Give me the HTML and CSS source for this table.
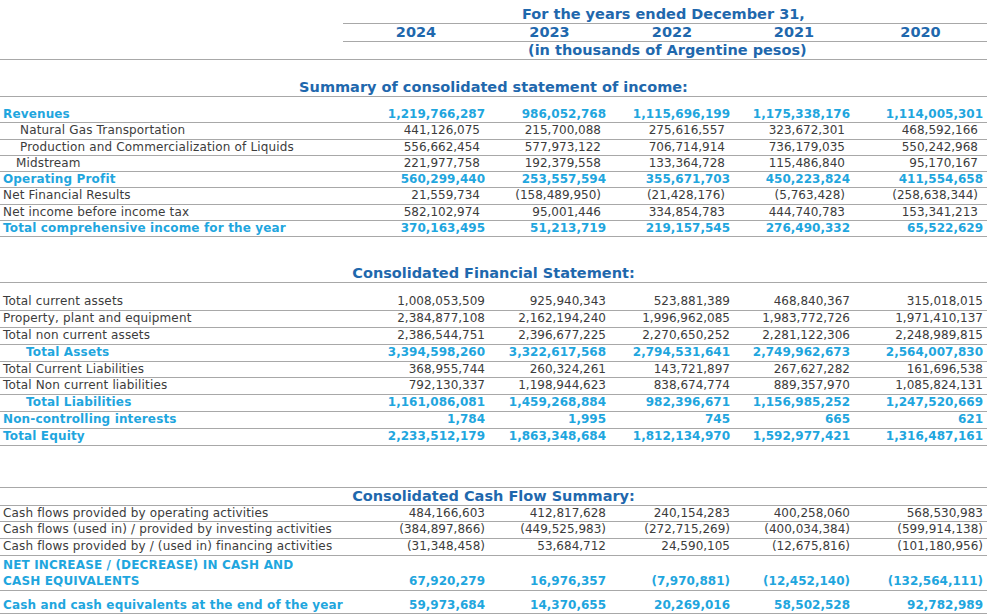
FILE: index.html
```html
<!DOCTYPE html>
<html lang="en">

<head>
    <meta charset="UTF-8">
    <meta name="viewport" content="width=device-width, initial-scale=1.0">
    <title>Selected Financial Data</title>
    <link rel="stylesheet" href="styles.css">
</head>

<body>
    <table class="fin">
        <colgroup>
            <col class="col-label">
            <col class="col-2024">
            <col class="col-2023">
            <col class="col-2022">
            <col class="col-2021">
            <col class="col-2020">
        </colgroup>

        <!-- Header -->
        <tbody class="head">
            <tr class="period">
                <td class="blank"></td>
                <td></td>
                <td colspan="3" class="period-text">For the years ended December 31,</td>
                <td></td>
            </tr>
            <tr class="years">
                <td class="blank"></td>
                <th>2024</th>
                <th>2023</th>
                <th>2022</th>
                <th>2021</th>
                <th>2020</th>
            </tr>
            <tr class="unit">
                <td></td>
                <td></td>
                <td colspan="3" class="unit-text">(in thousands of Argentine pesos)</td>
                <td></td>
            </tr>
        </tbody>

        <!-- Income statement -->
        <tbody class="income">
            <tr class="title">
                <th colspan="6">Summary of consolidated statement of income:</th>
            </tr>
            <tr class="total first">
                <td>Revenues</td>
                <td>1,219,766,287</td>
                <td>986,052,768</td>
                <td>1,115,696,199</td>
                <td>1,175,338,176</td>
                <td>1,114,005,301</td>
            </tr>
            <tr class="inset">
                <td class="sub">Natural Gas Transportation</td>
                <td>441,126,075</td>
                <td>215,700,088</td>
                <td>275,616,557</td>
                <td>323,672,301</td>
                <td>468,592,166</td>
            </tr>
            <tr class="inset">
                <td class="sub">Production and Commercialization of Liquids</td>
                <td>556,662,454</td>
                <td>577,973,122</td>
                <td>706,714,914</td>
                <td>736,179,035</td>
                <td>550,242,968</td>
            </tr>
            <tr class="inset">
                <td class="sub-sm">Midstream</td>
                <td>221,977,758</td>
                <td>192,379,558</td>
                <td>133,364,728</td>
                <td>115,486,840</td>
                <td>95,170,167</td>
            </tr>
            <tr class="total">
                <td>Operating Profit</td>
                <td>560,299,440</td>
                <td>253,557,594</td>
                <td>355,671,703</td>
                <td>450,223,824</td>
                <td>411,554,658</td>
            </tr>
            <tr class="inset">
                <td>Net Financial Results</td>
                <td>21,559,734</td>
                <td>(158,489,950)</td>
                <td>(21,428,176)</td>
                <td>(5,763,428)</td>
                <td>(258,638,344)</td>
            </tr>
            <tr class="inset">
                <td>Net income before income tax</td>
                <td>582,102,974</td>
                <td>95,001,446</td>
                <td>334,854,783</td>
                <td>444,740,783</td>
                <td>153,341,213</td>
            </tr>
            <tr class="total">
                <td>Total comprehensive income for the year</td>
                <td>370,163,495</td>
                <td>51,213,719</td>
                <td>219,157,545</td>
                <td>276,490,332</td>
                <td>65,522,629</td>
            </tr>
        </tbody>

        <!-- Financial position -->
        <tbody class="balance">
            <tr class="title">
                <th colspan="6">Consolidated Financial Statement:</th>
            </tr>
            <tr class="first">
                <td>Total current assets</td>
                <td>1,008,053,509</td>
                <td>925,940,343</td>
                <td>523,881,389</td>
                <td>468,840,367</td>
                <td>315,018,015</td>
            </tr>
            <tr>
                <td>Property, plant and equipment</td>
                <td>2,384,877,108</td>
                <td>2,162,194,240</td>
                <td>1,996,962,085</td>
                <td>1,983,772,726</td>
                <td>1,971,410,137</td>
            </tr>
            <tr>
                <td>Total non current assets</td>
                <td>2,386,544,751</td>
                <td>2,396,677,225</td>
                <td>2,270,650,252</td>
                <td>2,281,122,306</td>
                <td>2,248,989,815</td>
            </tr>
            <tr class="total">
                <td class="sub-lg">Total Assets</td>
                <td>3,394,598,260</td>
                <td>3,322,617,568</td>
                <td>2,794,531,641</td>
                <td>2,749,962,673</td>
                <td>2,564,007,830</td>
            </tr>
            <tr>
                <td>Total Current Liabilities</td>
                <td>368,955,744</td>
                <td>260,324,261</td>
                <td>143,721,897</td>
                <td>267,627,282</td>
                <td>161,696,538</td>
            </tr>
            <tr>
                <td>Total Non current liabilities</td>
                <td>792,130,337</td>
                <td>1,198,944,623</td>
                <td>838,674,774</td>
                <td>889,357,970</td>
                <td>1,085,824,131</td>
            </tr>
            <tr class="total">
                <td class="sub-lg">Total Liabilities</td>
                <td>1,161,086,081</td>
                <td>1,459,268,884</td>
                <td>982,396,671</td>
                <td>1,156,985,252</td>
                <td>1,247,520,669</td>
            </tr>
            <tr class="total">
                <td>Non-controlling interests</td>
                <td>1,784</td>
                <td>1,995</td>
                <td>745</td>
                <td>665</td>
                <td>621</td>
            </tr>
            <tr class="total">
                <td>Total Equity</td>
                <td>2,233,512,179</td>
                <td>1,863,348,684</td>
                <td>1,812,134,970</td>
                <td>1,592,977,421</td>
                <td>1,316,487,161</td>
            </tr>
        </tbody>

        <!-- Cash flow -->
        <tbody class="cash">
            <tr class="spacer">
                <td colspan="6"><div class="rule"></div></td>
            </tr>
            <tr class="title">
                <th colspan="6">Consolidated Cash Flow Summary:</th>
            </tr>
            <tr>
                <td>Cash flows provided by operating activities</td>
                <td>484,166,603</td>
                <td>412,817,628</td>
                <td>240,154,283</td>
                <td>400,258,060</td>
                <td>568,530,983</td>
            </tr>
            <tr>
                <td>Cash flows (used in) / provided by investing activities</td>
                <td>(384,897,866)</td>
                <td>(449,525,983)</td>
                <td>(272,715,269)</td>
                <td>(400,034,384)</td>
                <td>(599,914,138)</td>
            </tr>
            <tr>
                <td>Cash flows provided by / (used in) financing activities</td>
                <td>(31,348,458)</td>
                <td>53,684,712</td>
                <td>24,590,105</td>
                <td>(12,675,816)</td>
                <td>(101,180,956)</td>
            </tr>
            <tr class="total net">
                <td>NET INCREASE / (DECREASE) IN CASH AND<br>CASH EQUIVALENTS</td>
                <td>67,920,279</td>
                <td>16,976,357</td>
                <td>(7,970,881)</td>
                <td>(12,452,140)</td>
                <td>(132,564,111)</td>
            </tr>
            <tr class="total last">
                <td>Cash and cash equivalents at the end of the year</td>
                <td>59,973,684</td>
                <td>14,370,655</td>
                <td>20,269,016</td>
                <td>58,502,528</td>
                <td>92,782,989</td>
            </tr>
        </tbody>
    </table>
</body>

</html>
```

FILE: styles.css
```css
body {
    margin: 0;
    padding: 0;
    background: #fff;
    font-family: "DejaVu Sans", Verdana, sans-serif;
    font-size: 12px;
    color: #3c3c3c;
}

.fin {
    width: 987px;
    table-layout: fixed;
    border-collapse: separate;
    border-spacing: 0;
}

.col-label { width: 343px; }
.col-2024 { width: 146px; }
.col-2023 { width: 121px; }
.col-2022 { width: 124px; }
.col-2021 { width: 120px; }
.col-2020 { width: 133px; }

.fin td,
.fin th {
    padding: 0 4px 0 0;
    border-bottom: 1px solid #a8a8a8;
    text-align: right;
    white-space: nowrap;
    vertical-align: bottom;
}

.fin td:first-child {
    padding-left: 3px;
    text-align: left;
    letter-spacing: 0.15px;
}
/* Header */

.head td,
.head th {
    font-size: 14.5px;
    font-weight: bold;
    color: #1f68ad;
    line-height: 17px;
    letter-spacing: 0;
}

.fin .blank {
    border-bottom: none;
}

.period td {
    padding-top: 6px;
}

.fin .period-text {
    text-align: left;
    padding-left: 33px;
}

.fin .unit-text {
    text-align: left;
    padding-left: 39px;
}

.years th {
    text-align: center;
    padding: 0;
}
/* Section titles */

.title th {
    font-size: 14.5px;
    font-weight: bold;
    color: #1f68ad;
    text-align: center;
    line-height: 17px;
    padding: 0;
}

.income .title th { padding-top: 19px; }
.balance .title th { padding-top: 27.5px; }
.cash .title th { padding-top: 0; }
/* Rows */

.income td { line-height: 15.3px; }
.balance td { line-height: 15.8px; }
.cash td { line-height: 15.7px; }

.fin .first td { padding-top: 10px; }
.balance .first td { padding-top: 11.5px; }

.total td {
    font-weight: bold;
    color: #1fa6de;
}

.inset td + td {
    padding-right: 9px;
}

.fin td.sub { padding-left: 20px; }
.fin td.sub-sm { padding-left: 16px; }
.fin td.sub-lg { padding-left: 26px; }

.fin .spacer td {
    padding: 41px 0 0;
    line-height: 0;
    border-bottom: none;
}

.rule {
    height: 1px;
    background: #a8a8a8;
}

.cash .net td {
    line-height: 16.7px;
    padding-top: 1px;
}

.cash .last td {
    line-height: 16px;
    padding-top: 5.5px;
}
```
